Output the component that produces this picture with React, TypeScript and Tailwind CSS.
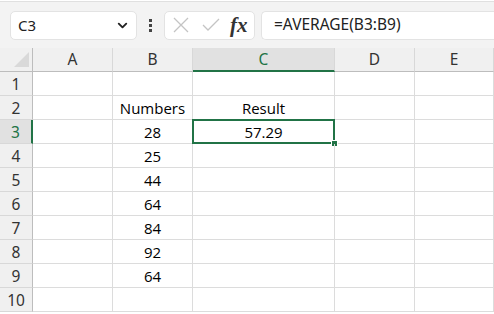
import { ChevronDown } from "lucide-react";

const cols = ["A", "B", "C", "D", "E"];
const numbers: Record<number, string> = { 3: "28", 4: "25", 5: "44", 6: "64", 7: "84", 8: "92", 9: "64" };

function Toolbar() {
  return (
    <div className="flex h-[46px] items-center bg-[#f3f3f3] pl-[10px]">
      <div className="flex h-[29px] w-[127px] items-center justify-between rounded-[5px] border border-[#e3e3e3] bg-white pl-[7px] pr-[6px] text-[15px] text-[#222]">
        <span>C3</span>
        <ChevronDown className="h-[15px] w-[15px] text-[#222]" strokeWidth={3} />
      </div>
      <div className="flex w-[27px] flex-col items-center gap-[2px]">
        <span className="h-[3px] w-[3px] bg-[#444]" />
        <span className="h-[3px] w-[3px] bg-[#444]" />
        <span className="h-[3px] w-[3px] bg-[#444]" />
      </div>
      <div className="flex h-[29px] w-[91px] items-center rounded-[5px] border border-[#e3e3e3] bg-white pl-[8px]">
        <svg width="16" height="16" viewBox="0 0 16 16" className="mr-[13px]">
          <path d="M1 1L15 15M15 1L1 15" stroke="#c4c4c4" strokeWidth="1.3" />
        </svg>
        <svg width="18" height="14" viewBox="0 0 18 14" className="mr-[10px]">
          <path d="M1 7L6 12L17 1" stroke="#c4c4c4" strokeWidth="1.3" fill="none" />
        </svg>
        <span className="font-['Liberation_Serif',serif] text-[21px] font-bold italic leading-none text-[#333]">fx</span>
      </div>
      <div className="ml-[6px] flex h-[29px] flex-1 items-center rounded-l-[5px] border border-r-0 border-[#e3e3e3] bg-white pl-[12px] text-[15.5px] text-[#222]">
        =AVERAGE(B3:B9)
      </div>
    </div>
  );
}

function Sheet() {
  const rows = Array.from({ length: 10 }, (_, i) => i + 1);
  return (
    <div className="grid grid-cols-[33px_80px_80px_142px_80px_1fr] bg-white">
      <div className="flex h-[24px] items-end justify-end border-r border-b border-[#bdbdbd] bg-[#f0f0f0] pb-[4px] pr-[3px]">
        <div className="h-0 w-0 border-b-[15px] border-l-[15px] border-b-[#d9d9d9] border-l-transparent" />
      </div>
      {cols.map((c) =>
        c === "C" ? (
          <div key={c} className="flex h-[24px] items-center justify-center border-b-2 border-r border-b-[#217346] border-r-[#d8d8d8] bg-[#e1e1e1] pt-[1px] text-[15.5px] text-[#217346]">
            {c}
          </div>
        ) : (
          <div key={c} className="flex h-[24px] items-center justify-center border-r border-b border-r-[#d8d8d8] border-b-[#bdbdbd] bg-[#f0f0f0] pt-[1px] text-[15.5px] text-[#333]">
            {c}
          </div>
        )
      )}
      {rows.map((r) => (
        <Row key={r} r={r} />
      ))}
    </div>
  );
}

function Row({ r }: { r: number }) {
  const sel = r === 3;
  const cell = "flex h-[24px] items-center justify-center border-r border-b border-[#dcdcdc] pt-[2px] text-[15px] text-black font-['Open_Sans',sans-serif]";
  return (
    <>
      <div
        className={
          sel
            ? "flex h-[24px] items-center justify-center border-r-2 border-b border-r-[#217346] border-b-[#d8d8d8] bg-[#e1e1e1] pt-[2px] text-[15.5px] text-[#217346]"
            : "flex h-[24px] items-center justify-center border-r border-b border-r-[#bdbdbd] border-b-[#d8d8d8] bg-[#f0f0f0] pt-[2px] text-[15.5px] text-[#333]"
        }
      >
        {r}
      </div>
      <div className={cell} />
      <div className={cell}>{r === 2 ? "Numbers" : numbers[r] ?? ""}</div>
      <div className={`${cell} relative`}>
        {r === 2 ? "Result" : r === 3 ? "57.29" : ""}
        {sel && (
          <>
            <div className="pointer-events-none absolute -top-[1px] -left-[1px] -right-[1px] bottom-[-1px] border-2 border-[#217346]" />
            <div className="absolute -right-[3px] -bottom-[3px] h-[5px] w-[5px] bg-[#217346] outline outline-1 outline-white" />
          </>
        )}
      </div>
      <div className={cell} />
      <div className={cell} />
    </>
  );
}

export default function App() {
  return (
    <div className="h-[314px] w-[494px] overflow-hidden bg-white font-['Noto_Sans',sans-serif]">
      <div className="h-[2px] border-b border-[#e0e0e0] bg-white" />
      <Toolbar />
      <Sheet />
    </div>
  );
}
